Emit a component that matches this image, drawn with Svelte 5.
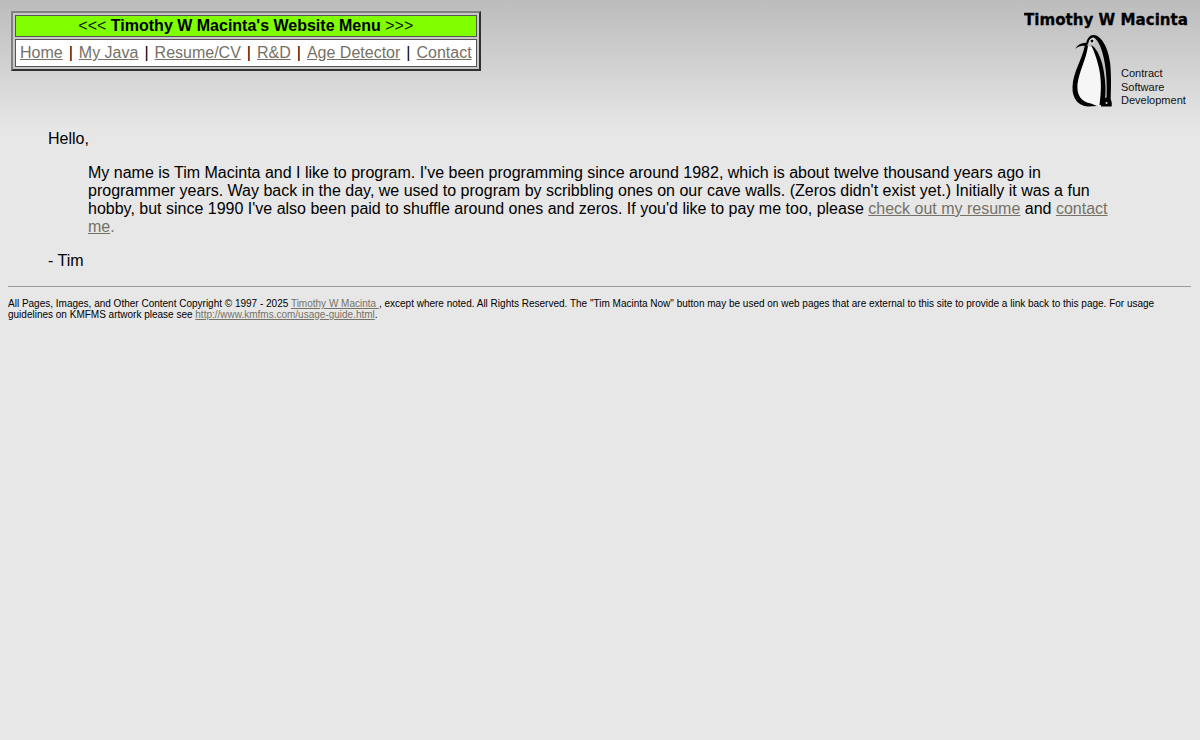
<script>
  const menu = ['Home', 'My Java', 'Resume/CV', 'R&D', 'Age Detector', 'Contact'];
</script>

<header class="top">
  <table class="menu">
    <tbody>
      <tr><td class="menu-title"><span class="arrows">&lt;&lt;&lt;</span> <b>Timothy W Macinta's Website Menu</b> <span class="arrows">&gt;&gt;&gt;</span></td></tr>
      <tr>
        <td class="menu-links">
          {#each menu as item, i}
            {#if i > 0}<span class="sep">|</span>{/if}<a href="#top">{item}</a>
          {/each}
        </td>
      </tr>
    </tbody>
  </table>

  <svg class="logo" viewBox="1024 12 164 96" width="164" height="96" role="img" aria-label="Timothy W Macinta logo">
    <text class="logo-name" x="1024" y="25" textLength="164" lengthAdjust="spacingAndGlyphs">Timothy W Macinta</text>
    <!-- head and body fill -->
    <path fill="#c4c4c4" d="M1086 44 C1088 38 1091 36 1094 36 C1100 37 1106 46 1108 60 L1108 100 L1102 100 C1104 80 1100 58 1093 48 Z" />
    <path fill="#f6f6f6" d="M1087 46 L1092 47 C1099 60 1103 82 1101 105 L1088 105 C1078 104 1073 96 1074 86 C1075 72 1084 60 1087 46 Z" />
    <!-- beak -->
    <path fill="#000" d="M1075 49 C1078 44 1083 42 1088 43 L1087 46.5 C1083 45 1079 46 1075 49 Z" />
    <!-- head outline, back and outer wing -->
    <path fill="#000" d="M1086 44 C1087 38 1090 34.5 1094 35 C1102 36 1108 48 1110 62 C1111.5 74 1111 90 1110.5 104 L1106.5 100 C1107.5 84 1106 66 1103 55 C1101 47 1098 40 1094 37.5 C1091 37.5 1089 40 1088 44 Z" />
    <!-- inner wing -->
    <path fill="#000" d="M1091 45 C1099 49 1104 66 1105 80 C1106 90 1105.5 98 1104 105 L1099.5 105 C1101.5 90 1101.5 78 1098.5 66 C1096.5 58 1094.5 52 1091 45 Z" />
    <!-- left outline -->
    <path fill="#000" d="M1085 45 L1088 46 C1086 60 1079.5 70 1077.5 84 C1076.5 95 1081 102 1091 103.5 L1097 106 L1088 106.5 C1078 106 1072 98 1072.5 87 C1073 72 1082 60 1085 45 Z" />
    <circle cx="1092" cy="41" r="2.6" fill="#eee" />
    <circle cx="1092" cy="41" r="1.5" fill="#000" />
    <!-- foot -->
    <path fill="#000" d="M1101 106.5 C1101 101 1105 97 1108 97 C1111 98 1112.5 103 1111.5 106.5 Z" />
    <circle cx="1106.5" cy="103" r="1" fill="#ddd" />
    <text class="logo-tag" x="1121" y="77">Contract</text>
    <text class="logo-tag" x="1121" y="90.5">Software</text>
    <text class="logo-tag" x="1121" y="104">Development</text>
  </svg>
</header>

<main>
  <blockquote class="outer">
    <p>Hello,</p>
    <blockquote class="inner">
      <p>My name is Tim Macinta and I like to program. I've been programming since around 1982, which is about twelve thousand years ago in programmer years. Way back in the day, we used to program by scribbling ones on our cave walls. (Zeros didn't exist yet.) Initially it was a fun hobby, but since 1990 I've also been paid to shuffle around ones and zeros. If you'd like to pay me too, please <a href="#top">check out my resume</a> and <a href="#top">contact me</a><span class="dot">.</span></p>
    </blockquote>
    <p>- Tim</p>
  </blockquote>
</main>

<hr />

<footer>
  All Pages, Images, and Other Content Copyright © 1997 - 2025 <a href="#top">Timothy W Macinta&nbsp;</a>, except where noted. All Rights Reserved. The "Tim Macinta Now" button may be used on web pages that are external to this site to provide a link back to this page. For usage guidelines on KMFMS artwork please see <a href="#top">http://www.kmfms.com/usage-guide.html</a>.
</footer>

<style>
  :global(body) {
    background: #e7e7e7 linear-gradient(#bcbcbc, #e7e7e7) no-repeat;
    background-size: 100% 132px;
    color: #000;
    font-family: "Liberation Sans", Arial, sans-serif;
    font-size: 16px;
    min-height: 740px;
  }
  a,
  .dot {
    color: #767166;
  }
  .top {
    display: flex;
    justify-content: space-between;
    align-items: flex-start;
    height: 130px;
    padding: 11px 12px 0 11px;
    box-sizing: border-box;
  }
  .menu {
    border: 2px solid;
    border-color: #808080 #303030 #303030 #808080;
    border-spacing: 2px;
    background: #c8c8c8;
  }
  .menu td {
    border: 1px solid #555;
    text-align: center;
    white-space: nowrap;
  }
  .menu-title {
    background: #7fff00;
    padding: 1px 4px;
  }
  .arrows {
    color: #111;
  }
  .menu-links {
    background: #fff;
    padding: 4px 4px;
  }
  .sep {
    margin: 0 6px;
  }
  .logo {
    margin-top: 1px;
    flex: none;
  }
  .logo-name {
    font-family: "DejaVu Sans", sans-serif;
    font-weight: 700;
    font-size: 15px;
    fill: #000;
    stroke: #000;
    stroke-width: 0.3px;
  }
  .logo-tag {
    font-family: "Liberation Sans", sans-serif;
    font-size: 11px;
    fill: #111;
  }
  blockquote {
    margin: 0 40px;
  }
  .outer {
    margin: 0 48px;
  }
  p {
    margin: 16px 0;
  }
  .outer > p:first-child {
    margin-top: 0;
  }
  hr {
    margin: 16px 9px 0 8px;
    border: none;
    border-top: 1px solid #999;
    height: 0;
  }
  footer {
    margin: 11px 8px 0;
    font-size: 10px;
    line-height: 11px;
  }
</style>
